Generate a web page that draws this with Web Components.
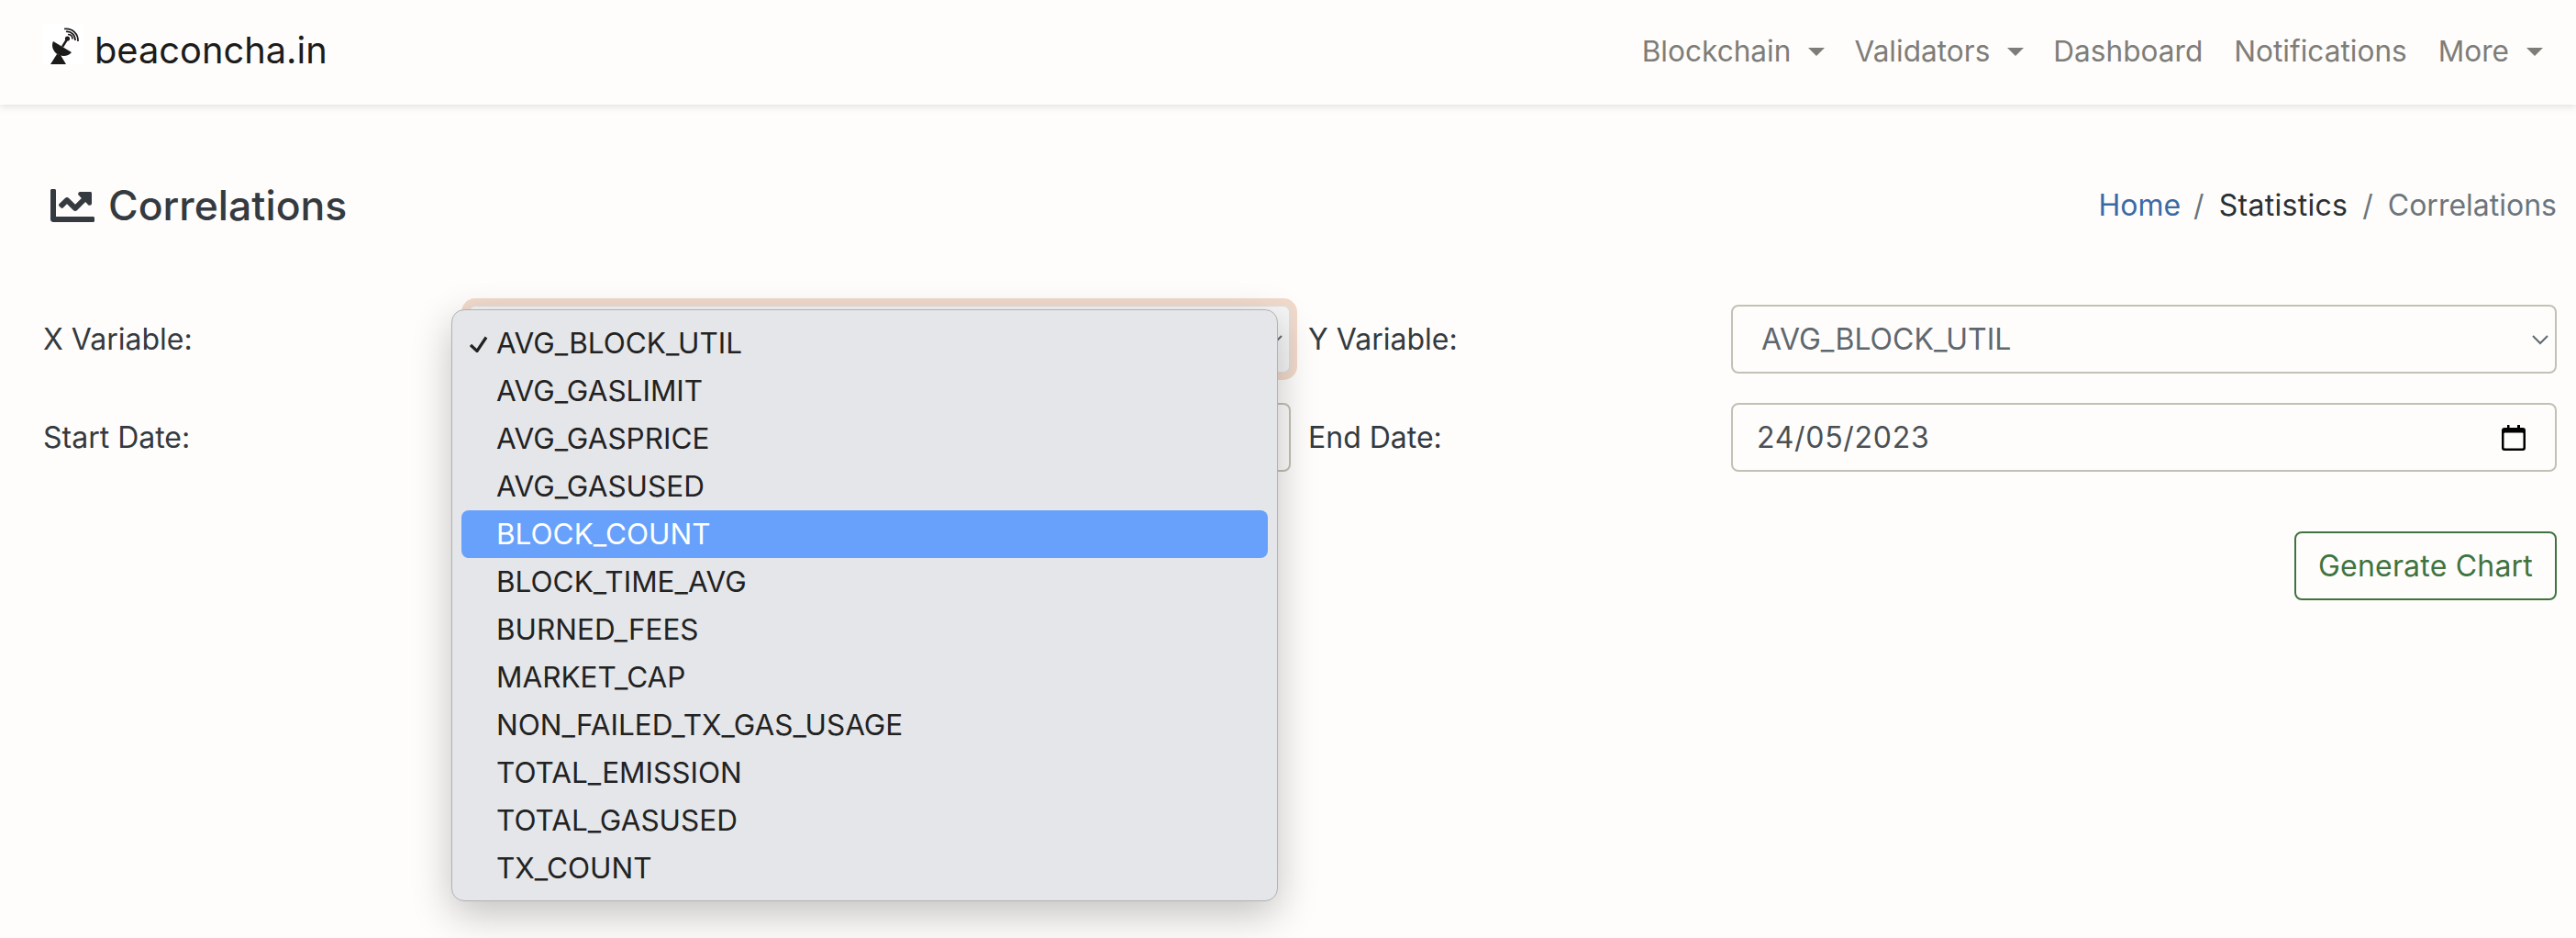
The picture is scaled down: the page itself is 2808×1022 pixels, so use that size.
<!DOCTYPE html>
<html>
<head>
<meta charset="utf-8">
<title>Correlations</title>
<style>
  html, body { margin: 0; padding: 0; background: #fefdfb; }
  body { font-family: Inter, "Liberation Sans", sans-serif; font-size: 32px; color: #343a40; height: 1022px; overflow: hidden; }
</style>
</head>
<body>
<app-navbar>
  <nav-link caret>Blockchain</nav-link>
  <nav-link caret>Validators</nav-link>
  <nav-link>Dashboard</nav-link>
  <nav-link>Notifications</nav-link>
  <nav-link caret>More</nav-link>
</app-navbar>
<page-head title="Correlations"></page-head>
<chart-form>
  <field-label>X Variable:</field-label>
  <select-box focused>
    <option-menu>
      <menu-option checked>AVG_BLOCK_UTIL</menu-option>
      <menu-option>AVG_GASLIMIT</menu-option>
      <menu-option>AVG_GASPRICE</menu-option>
      <menu-option>AVG_GASUSED</menu-option>
      <menu-option active>BLOCK_COUNT</menu-option>
      <menu-option>BLOCK_TIME_AVG</menu-option>
      <menu-option>BURNED_FEES</menu-option>
      <menu-option>MARKET_CAP</menu-option>
      <menu-option>NON_FAILED_TX_GAS_USAGE</menu-option>
      <menu-option>TOTAL_EMISSION</menu-option>
      <menu-option>TOTAL_GASUSED</menu-option>
      <menu-option>TX_COUNT</menu-option>
    </option-menu>
  </select-box>
  <field-label>Y Variable:</field-label>
  <select-box value="AVG_BLOCK_UTIL"></select-box>
  <field-label>Start Date:</field-label>
  <date-box></date-box>
  <field-label>End Date:</field-label>
  <date-box value="24/05/2023"></date-box>
  <outline-button slot="action">Generate Chart</outline-button>
</chart-form>

<script>
class AppNavbar extends HTMLElement {
  constructor() {
    super();
    this.attachShadow({ mode: "open" });
  }
  connectedCallback() {
    this.shadowRoot.innerHTML = `
      <style>
        :host { display: block; background: #fefdfb; box-shadow: 0 2px 8px rgba(0,0,0,.12); position: relative; z-index: 1; }
        .bar { height: 114px; box-sizing: border-box; padding: 0 38px 0 47px; display: flex; align-items: center; justify-content: space-between; }
        .brand { display: flex; align-items: center; gap: 12px; font-size: 39.8px; color: #1c1c1c; margin-bottom: 6px; }
        .brand svg { display: block; width: 44px; height: 44px; margin-bottom: 12px; }
        .links { display: flex; align-items: center; gap: 34px; margin-bottom: 4px; }
      </style>
      <div class="bar">
        <div class="brand">
          <svg viewBox="0 0 44 44">
            <rect width="44" height="44" fill="#fff"/>
            <path d="M11 19 L31 31 C27 36 19 36 14 32 C10 28 9 23 11 19Z" fill="#1c1b19"/>
            <path d="M8 44 L15 33 L19 34 L25 44Z" fill="#1c1b19"/>
            <path d="M21 25 L26 17" stroke="#1c1b19" stroke-width="2.4" fill="none"/>
            <circle cx="26.5" cy="16" r="2.6" fill="#1c1b19"/>
            <g fill="none" stroke="#1c1b19" stroke-width="1.7">
              <path d="M27 11.5 C30 11.5 32 13.5 32 16.5"/>
              <path d="M25 8.5 C31 8 35 12 35 18"/>
              <path d="M23 5.5 C32 4.5 38.5 11 38 19"/>
            </g>
          </svg>
          <span>beaconcha.in</span>
        </div>
        <div class="links"><slot></slot></div>
      </div>`;
  }
}
customElements.define("app-navbar", AppNavbar);

class NavLink extends HTMLElement {
  constructor() {
    super();
    this.attachShadow({ mode: "open" });
  }
  connectedCallback() {
    this.shadowRoot.innerHTML = `
      <style>
        :host { display: flex; align-items: center; color: #7e7d79; font-size: 31.6px; }
        .caret { width: 0; height: 0; margin-left: 19px; margin-top: 2px; margin-right: -2px; border-left: 9.6px solid transparent; border-right: 9.6px solid transparent; border-top: 9.6px solid #7e7d79; }
      </style>
      <slot></slot>${this.hasAttribute("caret") ? '<span class="caret"></span>' : ""}`;
  }
}
customElements.define("nav-link", NavLink);

class PageHead extends HTMLElement {
  constructor() {
    super();
    this.attachShadow({ mode: "open" });
  }
  connectedCallback() {
    this.shadowRoot.innerHTML = `
      <style>
        :host { display: block; }
        .head { display: flex; align-items: center; justify-content: space-between; padding: 80px 21px 80px 55px; height: 58px; }
        h1 { margin: 0; display: flex; align-items: center; gap: 15px; font-size: 44.5px; font-weight: 500; color: #343a40; }
        h1 span { position: relative; top: 1px; }
        h1 svg { display: block; width: 48px; height: 48px; fill: #343a40; position: relative; top: 1px; }
        ol { list-style: none; margin: 0; padding: 0; display: flex; gap: 16px; font-size: 32px; }
        .sep { color: #6c757d; }
        .home { color: #3a6aa5; margin-right: -2px; }
        .cur { color: #6c757d; }
        .mid { color: #2b2f33; letter-spacing: .3px; }
      </style>
      <div class="head">
        <h1>
          <svg viewBox="0 0 512 512"><path d="M496 384H64V80c0-8.84-7.16-16-16-16H16C7.16 64 0 71.16 0 80v336c0 17.67 14.33 32 32 32h464c8.84 0 16-7.16 16-16v-32c0-8.84-7.16-16-16-16zM464 96H345.94c-21.38 0-32.09 25.85-16.97 40.97l32.4 32.4L288 242.75l-73.37-73.37c-12.5-12.5-32.76-12.5-45.25 0l-68.69 68.69c-6.25 6.25-6.25 16.38 0 22.63l22.62 22.62c6.25 6.25 16.38 6.25 22.63 0L192 237.25l73.37 73.37c12.5 12.5 32.76 12.5 45.25 0l96-96 32.4 32.4c15.12 15.12 40.97 4.41 40.97-16.97V112c0-8.84-7.16-16-16-16z"/></svg>
          <span>${this.getAttribute("title")}</span>
        </h1>
        <ol>
          <li class="home">Home</li><li class="sep">/</li>
          <li class="mid">Statistics</li><li class="sep">/</li>
          <li class="cur">Correlations</li>
        </ol>
      </div>`;
  }
}
customElements.define("page-head", PageHead);

class ChartForm extends HTMLElement {
  constructor() {
    super();
    this.attachShadow({ mode: "open" });
  }
  connectedCallback() {
    this.shadowRoot.innerHTML = `
      <style>
        :host { display: block; padding: 0 21px 0 47px; }
        .grid { display: grid; grid-template-columns: 463px 897px 19px 461px 1fr; row-gap: 32px; }
        ::slotted(field-label:nth-of-type(even)) { grid-column: 4; }
        .action { display: flex; justify-content: flex-end; margin-top: 65px; }
      </style>
      <div class="grid"><slot></slot></div>
      <div class="action"><slot name="action"></slot></div>`;
  }
}
customElements.define("chart-form", ChartForm);

class FieldLabel extends HTMLElement {
  constructor() {
    super();
    this.attachShadow({ mode: "open" });
  }
  connectedCallback() {
    this.shadowRoot.innerHTML = `
      <style>
        :host { display: flex; align-items: center; height: 75px; color: #343a40; font-size: 32px; }
      </style>
      <slot></slot>`;
  }
}
customElements.define("field-label", FieldLabel);

class SelectBox extends HTMLElement {
  constructor() {
    super();
    this.attachShadow({ mode: "open" });
  }
  connectedCallback() {
    const value = this.getAttribute("value") || "";
    this.shadowRoot.innerHTML = `
      <style>
        :host { display: block; position: relative; height: 75px; }
        .box { height: 75px; box-sizing: border-box; border: 2px solid #c2c1b6; border-radius: 8px; background: #fefdfb; display: flex; align-items: center; justify-content: space-between; padding: 0 7px 0 31px; color: #5f676e; }
        :host([focused]) .box { border-color: #e6dfd9; box-shadow: 0 0 0 7px #f2dacb; background: #f6f6f6; }
        svg { display: block; width: 18px; height: 12px; }
      </style>
      <div class="box">
        <span>${value}</span>
        <svg viewBox="0 0 18 12"><path d="M1 2 L9 10 L17 2" fill="none" stroke="#5f6b70" stroke-width="2"/></svg>
      </div>
      <slot></slot>`;
  }
}
customElements.define("select-box", SelectBox);

class DateBox extends HTMLElement {
  constructor() {
    super();
    this.attachShadow({ mode: "open" });
  }
  connectedCallback() {
    const value = this.getAttribute("value") || "";
    this.shadowRoot.innerHTML = `
      <style>
        :host { display: block; height: 75px; }
        .box { height: 75px; box-sizing: border-box; border: 2px solid #c2c1b6; border-radius: 8px; background: #fefdfb; display: flex; align-items: center; justify-content: space-between; padding: 0 32px 0 26px; color: #4a5056; letter-spacing: .7px; }
        svg { display: block; width: 26px; height: 28px; }
      </style>
      <div class="box">
        <span>${value}</span>
        <svg viewBox="0 0 26 28">
          <path d="M6 0h2.5v3H17V0h3v3h3a3 3 0 0 1 3 3v19a3 3 0 0 1-3 3H3a3 3 0 0 1-3-3V6a3 3 0 0 1 3-3h3z" fill="#000"/>
          <rect x="2.5" y="8.5" width="21" height="17" rx="1" fill="#fefdfb"/>
        </svg>
      </div>`;
  }
}
customElements.define("date-box", DateBox);

class OptionMenu extends HTMLElement {
  constructor() {
    super();
    this.attachShadow({ mode: "open" });
  }
  connectedCallback() {
    this.shadowRoot.innerHTML = `
      <style>
        :host { display: block; position: absolute; z-index: 5; left: -18px; top: 5px; width: 901px; box-sizing: border-box; padding: 10px 10px 9px; background: #e5e6ea; border: 1px solid #b2b1af; border-radius: 14px; box-shadow: 0 14px 44px rgba(0,0,0,.24); }
      </style>
      <slot></slot>`;
  }
}
customElements.define("option-menu", OptionMenu);

class MenuOption extends HTMLElement {
  constructor() {
    super();
    this.attachShadow({ mode: "open" });
  }
  connectedCallback() {
    this.shadowRoot.innerHTML = `
      <style>
        :host { display: flex; align-items: center; position: relative; height: 52px; padding-left: 38px; border-radius: 8px; font-size: 31.5px; color: #222; }
        .t { position: relative; top: -1px; }
        :host([active]) { background: #68a1fb; color: #fff; }
        svg { position: absolute; left: 9px; top: 18px; width: 20px; height: 18px; }
      </style>
      ${this.hasAttribute("checked") ? '<svg viewBox="0 0 20 18"><path d="M1 10 L8 16.5 L18 1.5" fill="none" stroke="#222" stroke-width="3.2"/></svg>' : ""}
      <span class="t"><slot></slot></span>`;
  }
}
customElements.define("menu-option", MenuOption);

class OutlineButton extends HTMLElement {
  constructor() {
    super();
    this.attachShadow({ mode: "open" });
  }
  connectedCallback() {
    this.shadowRoot.innerHTML = `
      <style>
        :host { display: block; }
        .btn { height: 75px; box-sizing: border-box; border: 2px solid #3f7340; border-radius: 8px; color: #3f7340; padding: 0 24px; display: flex; align-items: center; font-size: 32px; letter-spacing: .2px; }
      </style>
      <div class="btn"><slot></slot></div>`;
  }
}
customElements.define("outline-button", OutlineButton);
</script>
</body>
</html>
